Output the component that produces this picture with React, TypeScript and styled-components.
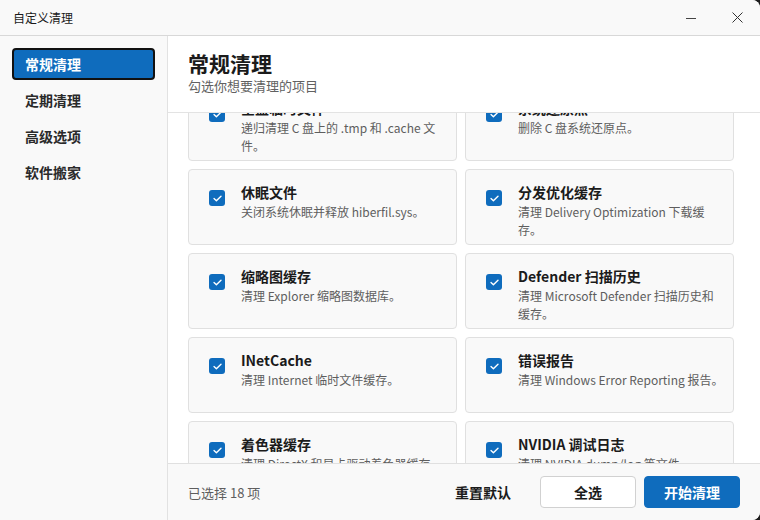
import React, { useLayoutEffect, useRef } from "react";
import styled, { createGlobalStyle } from "styled-components";

const GlobalStyle = createGlobalStyle`
  html, body {
    margin: 0;
    padding: 0;
    background: #1d1d1d;
  }
  body {
    font-family: "Noto Sans CJK SC", "Noto Sans", sans-serif;
    color: #1b1b1b;
  }
  * {
    box-sizing: border-box;
  }
`;

const Window = styled.div`
  width: 760px;
  height: 520px;
  display: flex;
  flex-direction: column;
  background: #ffffff;
  border-radius: 0 8px 8px 0;
  overflow: hidden;
`;

const TitleBar = styled.header`
  height: 36px;
  flex-shrink: 0;
  display: flex;
  align-items: center;
  padding-left: 13px;
  background: #f9f9f9;
  border-bottom: 1px solid #d8d8d8;
  font-size: 12px;
  color: #1a1a1a;
`;

const TitleText = styled.span`
  flex: 1;
`;

const CaptionButton = styled.button`
  width: 46px;
  height: 35px;
  display: flex;
  align-items: center;
  justify-content: center;
  border: none;
  background: none;
  padding: 0;
  color: #222;
`;

const Body = styled.div`
  flex: 1;
  display: flex;
  min-height: 0;
`;

const Sidebar = styled.nav`
  width: 168px;
  flex-shrink: 0;
  display: flex;
  flex-direction: column;
  gap: 4px;
  padding: 12px;
  background: #f9f9f9;
  border-right: 1px solid #e2e2e2;
`;

const NavItem = styled.button<{ $active?: boolean }>`
  height: 32px;
  display: flex;
  align-items: center;
  padding: 0 11px;
  border-radius: 4px;
  font-family: inherit;
  font-size: 14px;
  font-weight: 700;
  text-align: left;
  color: ${(p) => (p.$active ? "#ffffff" : "#2a2a2a")};
  background: ${(p) => (p.$active ? "#0f6cbd" : "transparent")};
  border: 2px solid ${(p) => (p.$active ? "#111111" : "transparent")};
`;

const Main = styled.main`
  flex: 1;
  display: flex;
  flex-direction: column;
  min-width: 0;
`;

const PageHeader = styled.div`
  height: 77px;
  flex-shrink: 0;
  padding: 14px 20px 0;
  border-bottom: 1px solid #e3e3e3;

  & > h1 {
    margin: 0;
    font-size: 21px;
    line-height: 27px;
    font-weight: 700;
    color: #1b1b1b;
  }
  & > p {
    margin: 0;
    font-size: 13px;
    line-height: 17px;
    color: #616161;
  }
`;

const ScrollArea = styled.div`
  flex: 1;
  overflow-y: auto;
  padding: 12px 26px 12px 20px;
  scrollbar-width: none;
  &::-webkit-scrollbar {
    display: none;
  }
`;

const CardGrid = styled.div`
  display: grid;
  grid-template-columns: 1fr 1fr;
  gap: 8px;
`;

const Card = styled.label`
  height: 76px;
  display: flex;
  gap: 16px;
  padding: 12px 9px 0 20px;
  background: #f9f9f9;
  border: 1px solid #e0e0e0;
  border-radius: 4px;
`;

const Check = styled.span`
  width: 16px;
  height: 16px;
  flex-shrink: 0;
  margin-top: 8px;
  display: flex;
  align-items: center;
  justify-content: center;
  border-radius: 3px;
  background: #0f6cbd;
`;

const CardText = styled.div`
  min-width: 0;

  & > h3 {
    margin: 0 0 1px;
    font-size: 14px;
    line-height: 20px;
    font-weight: 700;
    color: #1b1b1b;
  }
  & > p {
    margin: 0;
    font-size: 12px;
    line-height: 18px;
    color: #5e5e5e;
  }
`;

const Footer = styled.footer`
  height: 57px;
  flex-shrink: 0;
  display: flex;
  align-items: center;
  padding: 0 20px;
  background: #f9f9f9;
  border-top: 1px solid #e0e0e0;
`;

const Count = styled.span`
  flex: 1;
  font-size: 13px;
  color: #5e5e5e;
`;

const LinkButton = styled.button`
  margin-right: 21px;
  padding: 0;
  border: none;
  background: none;
  font-family: inherit;
  font-size: 14px;
  font-weight: 700;
  color: #1b1b1b;
`;

const ActionButton = styled.button<{ $primary?: boolean }>`
  width: 96px;
  height: 32px;
  margin-left: 8px;
  border-radius: 4px;
  font-family: inherit;
  font-size: 14px;
  font-weight: 700;
  color: ${(p) => (p.$primary ? "#ffffff" : "#1b1b1b")};
  background: ${(p) => (p.$primary ? "#0f6cbd" : "#ffffff")};
  border: 1px solid ${(p) => (p.$primary ? "#0f6cbd" : "#d1d1d1")};
`;

const items = [
  { title: "全盘临时文件", desc: "递归清理 C 盘上的 .tmp 和 .cache 文件。" },
  { title: "系统还原点", desc: "删除 C 盘系统还原点。" },
  { title: "休眠文件", desc: "关闭系统休眠并释放 hiberfil.sys。" },
  { title: "分发优化缓存", desc: "清理 Delivery Optimization 下载缓存。" },
  { title: "缩略图缓存", desc: "清理 Explorer 缩略图数据库。" },
  { title: "Defender 扫描历史", desc: "清理 Microsoft Defender 扫描历史和缓存。" },
  { title: "INetCache", desc: "清理 Internet 临时文件缓存。" },
  { title: "错误报告", desc: "清理 Windows Error Reporting 报告。" },
  { title: "着色器缓存", desc: "清理 DirectX 和显卡驱动着色器缓存。" },
  { title: "NVIDIA 调试日志", desc: "清理 NVIDIA dump/log 等文件。" },
  { title: "Windows 更新缓存", desc: "清理 SoftwareDistribution 下载目录。" },
  { title: "Prefetch 预读", desc: "清理系统预读文件。" },
];

const navItems = ["常规清理", "定期清理", "高级选项", "软件搬家"];

function CheckMark() {
  return (
    <svg width="9" height="7" viewBox="0 0 9 7" fill="none">
      <path
        d="M1 3.6 L3.4 5.8 L8 1.2"
        stroke="#ffffff"
        strokeWidth="1.4"
        strokeLinecap="round"
        strokeLinejoin="round"
      />
    </svg>
  );
}

export default function App() {
  const scrollRef = useRef<HTMLDivElement>(null);

  useLayoutEffect(() => {
    if (scrollRef.current) {
      scrollRef.current.scrollTop = 40;
    }
  }, []);

  return (
    <>
      <GlobalStyle />
      <Window>
        <TitleBar>
          <TitleText>自定义清理</TitleText>
          <CaptionButton aria-label="最小化">
            <svg width="10" height="10" viewBox="0 0 10 10">
              <path d="M0 5.5 H10" stroke="#444" strokeWidth="1" />
            </svg>
          </CaptionButton>
          <CaptionButton aria-label="关闭">
            <svg width="11" height="11" viewBox="0 0 11 11">
              <path d="M0.5 0.5 L10.5 10.5 M10.5 0.5 L0.5 10.5" stroke="#333" strokeWidth="1" />
            </svg>
          </CaptionButton>
        </TitleBar>
        <Body>
          <Sidebar>
            {navItems.map((name, i) => (
              <NavItem key={name} $active={i === 0}>
                {name}
              </NavItem>
            ))}
          </Sidebar>
          <Main>
            <PageHeader>
              <h1>常规清理</h1>
              <p>勾选你想要清理的项目</p>
            </PageHeader>
            <ScrollArea ref={scrollRef}>
              <CardGrid>
                {items.map((item) => (
                  <Card key={item.title}>
                    <Check>
                      <CheckMark />
                    </Check>
                    <CardText>
                      <h3>{item.title}</h3>
                      <p>{item.desc}</p>
                    </CardText>
                  </Card>
                ))}
              </CardGrid>
            </ScrollArea>
            <Footer>
              <Count>已选择 18 项</Count>
              <LinkButton>重置默认</LinkButton>
              <ActionButton>全选</ActionButton>
              <ActionButton $primary>开始清理</ActionButton>
            </Footer>
          </Main>
        </Body>
      </Window>
    </>
  );
}
